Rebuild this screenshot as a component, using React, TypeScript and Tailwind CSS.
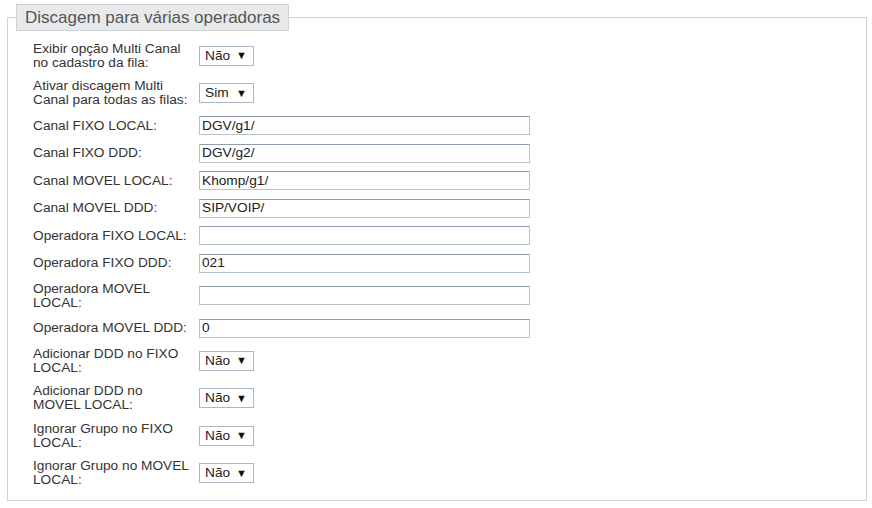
import React from "react";

type Row = { kind: "select" | "input"; lines: string[]; value: string };

const rows: Row[] = [
  { kind: "select", lines: ["Exibir opção Multi Canal", "no cadastro da fila:"], value: "Não" },
  { kind: "select", lines: ["Ativar discagem Multi", "Canal para todas as filas:"], value: "Sim" },
  { kind: "input", lines: ["Canal FIXO LOCAL:"], value: "DGV/g1/" },
  { kind: "input", lines: ["Canal FIXO DDD:"], value: "DGV/g2/" },
  { kind: "input", lines: ["Canal MOVEL LOCAL:"], value: "Khomp/g1/" },
  { kind: "input", lines: ["Canal MOVEL DDD:"], value: "SIP/VOIP/" },
  { kind: "input", lines: ["Operadora FIXO LOCAL:"], value: "" },
  { kind: "input", lines: ["Operadora FIXO DDD:"], value: "021" },
  { kind: "input", lines: ["Operadora MOVEL", "LOCAL:"], value: "" },
  { kind: "input", lines: ["Operadora MOVEL DDD:"], value: "0" },
  { kind: "select", lines: ["Adicionar DDD no FIXO", "LOCAL:"], value: "Não" },
  { kind: "select", lines: ["Adicionar DDD no", "MOVEL LOCAL:"], value: "Não" },
  { kind: "select", lines: ["Ignorar Grupo no FIXO", "LOCAL:"], value: "Não" },
  { kind: "select", lines: ["Ignorar Grupo no MOVEL", "LOCAL:"], value: "Não" },
];

function FakeSelect({ value }: { value: string }) {
  return (
    <div className="flex h-[20px] w-[55px] items-center justify-between border border-[#a9b7c6] bg-white pl-[5px] pr-[6px] text-[13.7px] leading-[14px] text-[#222]">
      <span>{value}</span>
      <span className="text-[11px] leading-none text-[#111]">▼</span>
    </div>
  );
}

function FakeInput({ value }: { value: string }) {
  return (
    <div className="flex h-[19px] w-[331px] items-center border border-[#b9c3cd] border-t-[#8e9eb0] bg-white pl-[2px] text-[13.7px] leading-[14px] text-[#222]">
      {value}
    </div>
  );
}

export default function App() {
  return (
    <div
      className="h-[508px] w-[872px] bg-white pt-[4px] pl-[7px]"
      style={{ fontFamily: '"Liberation Sans", Arial, sans-serif' }}
    >
      <fieldset className="m-0 w-[860px] border border-[#d2d2d2] px-[8px] pb-[8px] pt-0">
        <legend className="border border-[#cfd2d6] bg-[#e8e9eb] px-[8px] text-[17px] leading-[25px] text-[#555]">
          Discagem para várias operadoras
        </legend>
        <div className="mt-[6px] flex flex-col pl-[17px]">
          {rows.map((r, i) => {
            const tall = r.lines.length > 1;
            return (
              <div
                key={i}
                className={`flex items-center ${tall ? "h-[37.5px]" : "h-[27.5px]"}`}
              >
                <div className="w-[166px] whitespace-nowrap text-[13.7px] leading-[14px] text-[#333]">
                  {r.lines.map((l, j) => (
                    <div key={j}>{l}</div>
                  ))}
                </div>
                {r.kind === "select" ? <FakeSelect value={r.value} /> : <FakeInput value={r.value} />}
              </div>
            );
          })}
        </div>
      </fieldset>
    </div>
  );
}
